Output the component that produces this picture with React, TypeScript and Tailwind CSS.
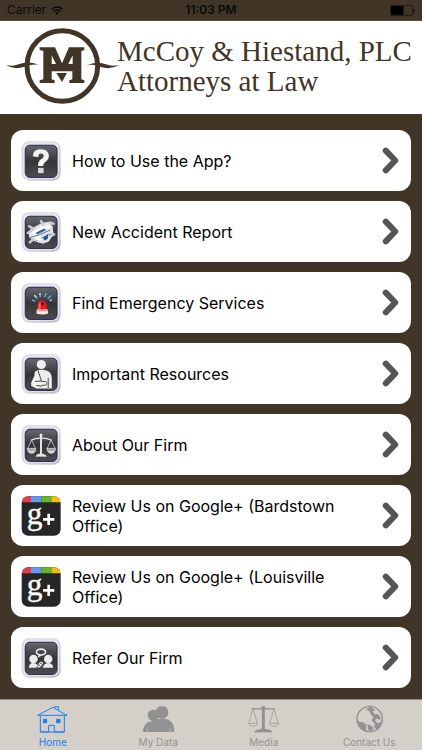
import type { ReactNode } from 'react'

const glyphs: Record<string, ReactNode> = {
  help: (
    <g fill="#f4f4f4">
      <path d="M36 47C35 31 45 25 60 25C76 25 84 34 84 45C84 56 78 60 72 65C68 69 67 71 67 76H51C51 66 53 61 60 56C66 52 68 50 68 45C68 40 65 38 60 38C54 38 52 41 52 49Z" />
      <path d="M51 82H68V98H51Z" fill="#d8d8d8" />
    </g>
  ),
  accident: (
    <g>
      <path d="M22 62L28 52L64 33L86 30L96 46L98 68L84 90L66 97L42 90L24 78Z" fill="#dfe3e8" />
      <path d="M20 64L34 56M24 44L36 50M60 28L66 38M88 32L98 36M26 92L36 84M92 72L100 68" stroke="#c8ccd2" strokeWidth="8" strokeLinecap="round" />
      <path d="M30 62L62 44L86 38L90 48L66 60L36 74Z" fill="#fff" />
      <path d="M44 63L70 50L76 55L48 69Z" fill="#2463ac" />
      <path d="M26 78L56 69L88 55M44 88L92 66" stroke="#6d7885" strokeWidth="3" fill="none" />
      <path d="M67 78L82 67L80 82L70 87Z" fill="#164f9e" />
      <path d="M38 78L58 73L64 86L48 87Z" fill="#f8fafb" />
    </g>
  ),
  emergency: (
    <g>
      <path d="M33 52L42 56M41 38L49 48M56 31L58 43M76 31L71 43M90 38L81 48" stroke="#5fa5e5" strokeWidth="5" />
      <path d="M40 37L45 43M57 31V36M87 54L93 51" stroke="#d4ecff" strokeWidth="4" />
      <path d="M48 85L50 61Q51 53 62 53Q74 53 75 61L80 85Z" fill="#e51b1c" />
      <path d="M53 65Q54 57 61 57L58 82H51Z" fill="#ff5b50" />
      <circle cx="64" cy="63" r="5" fill="#421538" />
      <path d="M47 81H80L82 93Q66 99 46 93Z" fill="#ececec" />
      <path d="M50 82H78L79 86H49Z" fill="#ff9186" />
    </g>
  ),
  resources: (
    <g fill="#eee">
      <circle cx="61" cy="32" r="14" />
      <path d="M44 52Q62 44 80 52Q93 57 93 76V105H46L30 97V88L40 66Q39 55 44 52Z" />
      <path d="M51 51L62 84M42 84L60 82M62 84Q78 82 78 90Q78 97 63 95M82 73V104M46 96L63 98" fill="none" stroke="#454549" strokeWidth="3" />
    </g>
  ),
  scales: (
    <g fill="none" stroke="#e6e6e6" strokeWidth="3">
      <path d="M60 29V90" strokeWidth="6" />
      <path d="M30 46Q45 39 60 40Q76 39 92 46" strokeWidth="4" />
      <path d="M31 46L20 71M31 46L43 71M91 46L79 71M91 46L103 71" strokeWidth="2" />
      <path d="M17 71H45Q43 87 31 87Q20 87 17 71ZM77 71H105Q102 87 91 87Q80 87 77 71Z" fill="#d6d6d6" strokeWidth="1" />
      <path d="M21 76H41M81 76H101" stroke="#55555a" strokeWidth="2" />
      <path d="M44 96Q46 88 60 88Q74 88 77 96Z" fill="#e6e6e6" strokeWidth="1" />
      <circle cx="60" cy="31" r="4" fill="#eee" strokeWidth="1" />
    </g>
  ),
  refer: (
    <g fill="#ebebeb">
      <circle cx="37" cy="64" r="13" />
      <circle cx="82" cy="64" r="13" />
      <path d="M23 91Q23 76 36 76Q46 76 49 82L46 91ZM65 91L70 81Q75 76 83 76Q97 77 97 91Z" />
      <ellipse cx="60" cy="43" rx="14" ry="9" fill="#454549" stroke="#ebebeb" strokeWidth="5" />
      <path d="M53 50L50 60L63 53" />
      <path d="M49 83L58 72L67 75L62 88L50 91Z" />
      <path d="M49 81L57 84M56 75L64 80M58 88L64 82" stroke="#454549" strokeWidth="3" />
    </g>
  ),
}

function FramedIcon({ name }: { name: string }) {
  return (
    <svg viewBox="0 0 120 122" className="h-10 w-10 shrink-0" aria-hidden="true">
      <defs>
        <linearGradient id={`${name}-frame`} x1="0" y1="0" x2="1" y2="1">
          <stop offset="0" stopColor="#d3d4da" />
          <stop offset="0.5" stopColor="#dadbe1" />
          <stop offset="1" stopColor="#b9bac0" />
        </linearGradient>
        <linearGradient id={`${name}-face`} x1="0" y1="0" x2="0" y2="1">
          <stop offset="0" stopColor="#67686c" />
          <stop offset="0.5" stopColor="#353538" />
          <stop offset="1" stopColor="#4c4c50" />
        </linearGradient>
      </defs>
      <rect x="1" y="1" width="119" height="120" rx="22" fill={`url(#${name}-frame)`} />
      <rect x="5" y="4" width="110" height="111" rx="19" fill="#e6e6ec" />
      <rect x="12" y="13" width="97" height="98" rx="14" fill={`url(#${name}-face)`} stroke="#262453" strokeWidth="3" />
      {glyphs[name]}
    </svg>
  )
}

function GooglePlusIcon({ id }: { id: string }) {
  return (
    <svg viewBox="0 0 120 120" className="h-10 w-10 shrink-0" aria-hidden="true">
      <defs>
        <clipPath id={id}>
          <rect x="2" y="1" width="117" height="118" rx="20" />
        </clipPath>
      </defs>
      <g clipPath={`url(#${id})`}>
        <path d="M0 0H120V120H0Z" fill="#262626" />
        <path d="M0 0H30V19H0Z" fill="#e53c49" />
        <path d="M30 0H62V19H30Z" fill="#6299f1" />
        <path d="M62 0H91V19H62Z" fill="#62b921" />
        <path d="M91 0H120V19H91Z" fill="#f5bd08" />
      </g>
      <text x="17" y="85" fontSize="94" fill="#fff" stroke="#fff" strokeWidth="1" fontFamily="'Liberation Serif', serif">g</text>
      <path d="M66 70H100M83 53V87" stroke="#fff" strokeWidth="8" />
    </svg>
  )
}

function Logo() {
  return (
    <svg viewBox="18 81 339 234" className="h-[78px] w-[113px] shrink-0" fill="#413527" role="img" aria-label="McCoy and Hiestand">
      <circle cx="187" cy="198" r="106" fill="none" stroke="#413527" strokeWidth="15" />
      <path d="M18 195Q39 200 56 193Q84 182 116 194Q93 192 74 200Q42 211 18 195Z" />
      <path d="M357 195Q336 200 318 193Q290 182 258 197Q282 190 300 200Q331 211 357 195Z" />
      <path d="M119 142H165L186 190L207 142H253V150L244 153V238L253 241V249H208V241L217 238V214H155V238L164 241V249H119V241L130 238V153L119 150Z" />
      <path d="M155 166V192H168ZM218 166V192H205Z" fill="#fff" />
      <path d="M169 219H201L186 246Z" />
    </svg>
  )
}

const rows = [
  { label: 'How to Use the App?', icon: <FramedIcon name="help" /> },
  { label: 'New Accident Report', icon: <FramedIcon name="accident" /> },
  { label: 'Find Emergency Services', icon: <FramedIcon name="emergency" /> },
  { label: 'Important Resources', icon: <FramedIcon name="resources" /> },
  { label: 'About Our Firm', icon: <FramedIcon name="scales" /> },
  { label: 'Review Us on Google+ (Bardstown Office)', icon: <GooglePlusIcon id="bardstown" /> },
  { label: 'Review Us on Google+ (Louisville Office)', icon: <GooglePlusIcon id="louisville" /> },
  { label: 'Refer Our Firm', icon: <FramedIcon name="refer" /> },
]

const tabs = [
  {
    label: 'Home',
    active: true,
    icon: (
      <g fill="none" stroke="currentColor" strokeWidth="3">
        <path d="M5 31L50 7L93 31ZM13 33V81H85V33M38 81V61H55V81M13 81H38M55 81H85" />
        <path d="M56 10V5H67V17" />
        <path d="M22 43H32V53H22ZM62 43H72V53H62Z" fill="currentColor" />
      </g>
    ),
  },
  {
    label: 'My Data',
    icon: (
      <g fill="currentColor">
        <circle cx="34" cy="31" r="17" />
        <circle cx="60" cy="22" r="19" />
        <path d="M3 81Q3 52 28 49L42 44Q61 37 79 44Q97 51 97 81Z" />
        <path d="M16 81V71M84 81V70" stroke="#d5cfca" strokeWidth="2" />
      </g>
    ),
  },
  {
    label: 'Media',
    icon: (
      <g fill="none" stroke="currentColor" strokeWidth="2">
        <path d="M49 3V76" strokeWidth="9" />
        <path d="M15 10Q33 14 49 9Q65 14 82 10" strokeWidth="4" />
        <path d="M17 11L6 55M18 11L31 55M81 11L68 55M82 11L93 55" />
        <path d="M4 55H32Q30 64 18 64Q7 64 4 55ZM67 55H95Q92 64 81 64Q70 64 67 55Z" />
        <path d="M22 81Q25 75 42 73H56Q73 75 76 81Z" fill="currentColor" />
      </g>
    ),
  },
  {
    label: 'Contact Us',
    icon: (
      <g>
        <circle cx="50" cy="42" r="38" fill="none" stroke="currentColor" strokeWidth="4" />
        <path d="M33 9L24 17L17 26L12 41L19 50L31 52L41 60L38 70L42 79Q15 72 12 43Q15 17 40 6ZM57 8L66 15L59 20L65 28L75 28L84 39L79 45L72 40L66 46L73 55L83 52L87 45Q87 65 72 74L63 67L66 58L56 46L61 36L54 29L48 17L39 14L49 6ZM43 57L56 62L62 72L51 80L45 73Z" fill="currentColor" />
      </g>
    ),
  },
]

function StatusBar() {
  return (
    <div className="grid h-[21px] grid-cols-3 items-center border-b border-[#55483a] px-[7px] text-xs text-[#0c0905]">
      <div className="flex items-center gap-[5px]">
        <span>Carrier</span>
        <svg viewBox="0 0 38 28" className="h-[9px] w-3" fill="none" stroke="currentColor" strokeWidth="5" aria-hidden="true">
          <path d="M2 10Q19-4 36 10M8 17Q19 8 30 17" />
          <path d="M13 21Q19 16 25 21L19 28Z" fill="currentColor" stroke="none" />
        </svg>
      </div>
      <span className="text-center font-semibold">11:03 PM</span>
      <svg viewBox="0 0 74 32" className="h-[11px] w-[25px] justify-self-end" aria-hidden="true">
        <rect x="1" y="1" width="66" height="30" rx="4" fill="none" stroke="#15100a" strokeWidth="2" />
        <path d="M3 3H40V29H3Z" fill="#000" />
        <path d="M69 11Q74 12 74 16Q74 20 69 21Z" fill="#15100a" />
      </svg>
    </div>
  )
}

function App() {
  return (
    <div className="flex min-h-screen flex-col bg-[#413527] font-['Inter','Liberation_Sans',sans-serif]">
      <StatusBar />

      <header className="flex items-center bg-white px-[6px] pt-[6px] pb-[9px] text-[#413527]">
        <Logo />
        <h1 className="-ml-[2px] font-['Liberation_Serif',serif] text-[29px] leading-[30px] whitespace-nowrap">
          <span className="block">McCoy &amp; Hiestand, PLC</span>
          <span className="block">Attorneys at Law</span>
        </h1>
      </header>

      <main className="flex-1 px-[11px] pt-4 pb-[10px]">
        <ul className="flex flex-col gap-[10px]">
          {rows.map((row) => (
            <li key={row.label}>
              <a href="#" className="flex min-h-[61px] items-center gap-[11px] rounded-xl bg-white py-[10px] pr-3 pl-[10px] text-black">
                {row.icon}
                <span className="flex-1 pr-8 text-base leading-5">{row.label}</span>
                <svg viewBox="0 0 50 80" className="h-[27px] w-[17px] shrink-0" fill="none" stroke="#555" strokeWidth="18" strokeLinecap="round" strokeLinejoin="round" aria-hidden="true">
                  <path d="M11 11L39 40L11 69" />
                </svg>
              </a>
            </li>
          ))}
        </ul>
      </main>

      <nav className="sticky bottom-0 flex h-[51px] border-t border-[#918980] bg-[#d5cfca]">
        {tabs.map((tab) => (
          <a
            key={tab.label}
            href="#"
            className={`flex flex-1 flex-col items-center pt-[5px] text-[10px] leading-3 ${tab.active ? 'text-[#1a80f5]' : 'text-[#929292]'}`}
          >
            <svg viewBox="0 0 99 84" className="h-7 w-[33px]" aria-hidden="true">
              {tab.icon}
            </svg>
            <span className="mt-[3px]">{tab.label}</span>
          </a>
        ))}
      </nav>
    </div>
  )
}

export default App
